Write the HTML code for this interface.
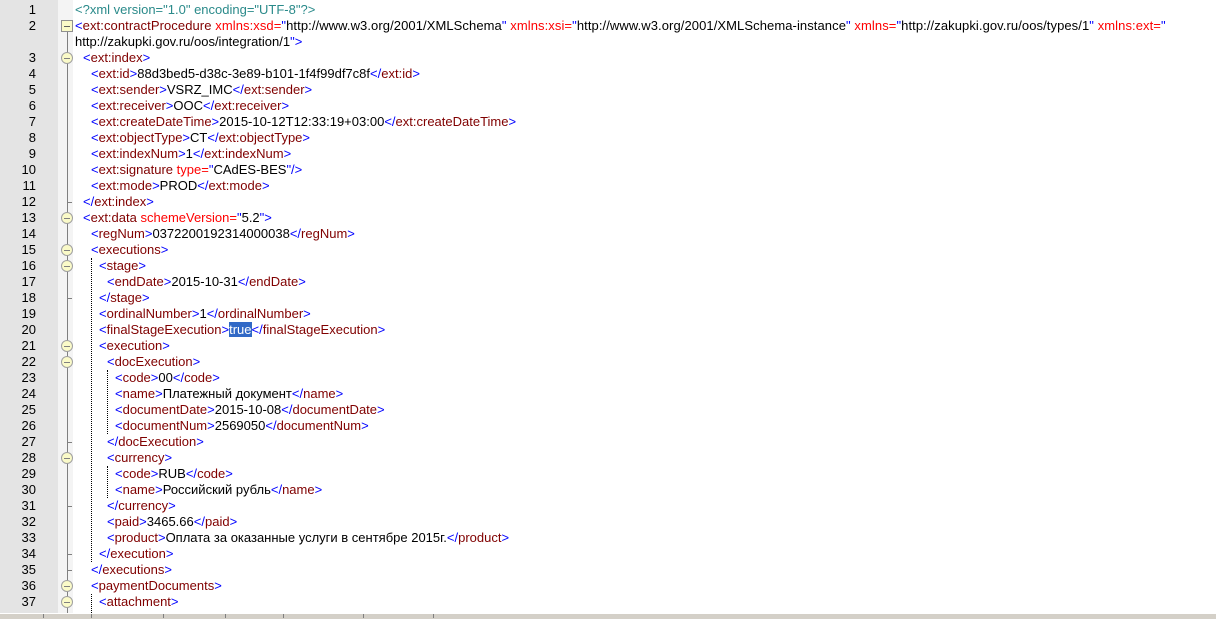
<!DOCTYPE html>
<html><head><meta charset="utf-8"><style>
body{margin:0;width:1216px;height:618px;overflow:hidden;background:#fff;position:relative;font-family:"Liberation Sans",Tahoma,sans-serif;font-size:13px}
#ln{position:absolute;left:0;top:0;width:58px;height:613px;background:#e4e4e4}
#fm{position:absolute;left:58px;top:0;width:15px;height:613px;background:#f4f4f4}
.n{position:absolute;left:0;width:36px;text-align:right;height:16px;line-height:16px;color:#000}
.l{position:absolute;height:16px;line-height:16px;white-space:pre;color:#000}
.w{letter-spacing:0.08px}
.b{color:#0000ff}.t{color:#800000}.a{color:#ff0000}.x{color:#2a8a8a}
.sel{background:#3169c6;color:#fff}
.g{position:absolute;width:0;border-left:1px dotted #000}
.c{position:absolute;left:61px;width:12px;height:12px;border-radius:50%;background:#fafac8;border:1px solid #a0a0a0;box-sizing:border-box}
.c::after{content:"";position:absolute;left:2px;top:5px;width:6px;height:1px;background:#808080}
.tk{position:absolute;left:67px;width:5px;height:1px;background:#808080}
#sb{position:absolute;left:0;top:613px;width:1216px;height:5px;background:#d4d0c8;border-top:1px solid #fff}
.sp{position:absolute;top:614px;width:1px;height:4px;background:#808080}
</style></head><body>
<div id="ln"></div><div id="fm"></div>
<div style="position:absolute;left:67px;top:26px;width:1px;height:587px;background:#808080"></div>
<div style="position:absolute;left:61px;top:20px;width:12px;height:12px;background:#fafac8;border:1px solid #909090;box-sizing:border-box"><div style="position:absolute;left:2px;top:5px;width:6px;height:1px;background:#606060"></div></div>
<div class="c" style="top:52px"></div>
<div class="c" style="top:212px"></div>
<div class="c" style="top:244px"></div>
<div class="c" style="top:260px"></div>
<div class="c" style="top:340px"></div>
<div class="c" style="top:356px"></div>
<div class="c" style="top:452px"></div>
<div class="c" style="top:580px"></div>
<div class="c" style="top:596px"></div>
<div class="tk" style="top:202px"></div>
<div class="tk" style="top:298px"></div>
<div class="tk" style="top:442px"></div>
<div class="tk" style="top:506px"></div>
<div class="tk" style="top:554px"></div>
<div class="tk" style="top:570px"></div>
<div class="g" style="left:91px;top:258px;height:304px"></div>
<div class="g" style="left:91px;top:594px;height:19px"></div>
<div class="g" style="left:107px;top:370px;height:64px"></div>
<div class="g" style="left:107px;top:466px;height:32px"></div>

<div class="n" style="top:2px">1</div><div class="n" style="top:18px">2</div>
<div class="n" style="top:50px">3</div><div class="n" style="top:66px">4</div><div class="n" style="top:82px">5</div><div class="n" style="top:98px">6</div><div class="n" style="top:114px">7</div><div class="n" style="top:130px">8</div><div class="n" style="top:146px">9</div><div class="n" style="top:162px">10</div><div class="n" style="top:178px">11</div><div class="n" style="top:194px">12</div><div class="n" style="top:210px">13</div><div class="n" style="top:226px">14</div><div class="n" style="top:242px">15</div><div class="n" style="top:258px">16</div><div class="n" style="top:274px">17</div><div class="n" style="top:290px">18</div><div class="n" style="top:306px">19</div><div class="n" style="top:322px">20</div><div class="n" style="top:338px">21</div><div class="n" style="top:354px">22</div><div class="n" style="top:370px">23</div><div class="n" style="top:386px">24</div><div class="n" style="top:402px">25</div><div class="n" style="top:418px">26</div><div class="n" style="top:434px">27</div><div class="n" style="top:450px">28</div><div class="n" style="top:466px">29</div><div class="n" style="top:482px">30</div><div class="n" style="top:498px">31</div><div class="n" style="top:514px">32</div><div class="n" style="top:530px">33</div><div class="n" style="top:546px">34</div><div class="n" style="top:562px">35</div><div class="n" style="top:578px">36</div><div class="n" style="top:594px">37</div>

<div class="l x" style="left:75px;top:2px">&lt;?xml version="1.0" encoding="UTF-8"?&gt;</div>
<div class="l w" style="left:75px;top:18px"><span class="b">&lt;</span><span class="t">ext:contractProcedure</span> <span class="a">xmlns:xsd=</span><span class="b">"</span>http://www.w3.org/2001/XMLSchema<span class="b">"</span> <span class="a">xmlns:xsi=</span><span class="b">"</span>http://www.w3.org/2001/XMLSchema-instance<span class="b">"</span> <span class="a">xmlns=</span><span class="b">"</span>http://zakupki.gov.ru/oos/types/1<span class="b">"</span> <span class="a">xmlns:ext=</span><span class="b">"</span></div>
<div class="l" style="left:75px;top:34px">http://zakupki.gov.ru/oos/integration/1<span class="b">"&gt;</span></div>
<div class="l" style="left:83px;top:50px"><span class="b">&lt;</span><span class="t">ext:index</span><span class="b">&gt;</span></div>
<div class="l" style="left:91px;top:66px"><span class="b">&lt;</span><span class="t">ext:id</span><span class="b">&gt;</span>88d3bed5-d38c-3e89-b101-1f4f99df7c8f<span class="b">&lt;/</span><span class="t">ext:id</span><span class="b">&gt;</span></div>
<div class="l" style="left:91px;top:82px"><span class="b">&lt;</span><span class="t">ext:sender</span><span class="b">&gt;</span>VSRZ_IMC<span class="b">&lt;/</span><span class="t">ext:sender</span><span class="b">&gt;</span></div>
<div class="l" style="left:91px;top:98px"><span class="b">&lt;</span><span class="t">ext:receiver</span><span class="b">&gt;</span>OOC<span class="b">&lt;/</span><span class="t">ext:receiver</span><span class="b">&gt;</span></div>
<div class="l" style="left:91px;top:114px"><span class="b">&lt;</span><span class="t">ext:createDateTime</span><span class="b">&gt;</span>2015-10-12T12:33:19+03:00<span class="b">&lt;/</span><span class="t">ext:createDateTime</span><span class="b">&gt;</span></div>
<div class="l" style="left:91px;top:130px"><span class="b">&lt;</span><span class="t">ext:objectType</span><span class="b">&gt;</span>CT<span class="b">&lt;/</span><span class="t">ext:objectType</span><span class="b">&gt;</span></div>
<div class="l" style="left:91px;top:146px"><span class="b">&lt;</span><span class="t">ext:indexNum</span><span class="b">&gt;</span>1<span class="b">&lt;/</span><span class="t">ext:indexNum</span><span class="b">&gt;</span></div>
<div class="l" style="left:91px;top:162px"><span class="b">&lt;</span><span class="t">ext:signature</span> <span class="a">type=</span><span class="b">"</span>CAdES-BES<span class="b">"/&gt;</span></div>
<div class="l" style="left:91px;top:178px"><span class="b">&lt;</span><span class="t">ext:mode</span><span class="b">&gt;</span>PROD<span class="b">&lt;/</span><span class="t">ext:mode</span><span class="b">&gt;</span></div>
<div class="l" style="left:83px;top:194px"><span class="b">&lt;/</span><span class="t">ext:index</span><span class="b">&gt;</span></div>
<div class="l" style="left:83px;top:210px"><span class="b">&lt;</span><span class="t">ext:data</span> <span class="a">schemeVersion=</span><span class="b">"</span>5.2<span class="b">"&gt;</span></div>
<div class="l" style="left:91px;top:226px"><span class="b">&lt;</span><span class="t">regNum</span><span class="b">&gt;</span>0372200192314000038<span class="b">&lt;/</span><span class="t">regNum</span><span class="b">&gt;</span></div>
<div class="l" style="left:91px;top:242px"><span class="b">&lt;</span><span class="t">executions</span><span class="b">&gt;</span></div>
<div class="l" style="left:99px;top:258px"><span class="b">&lt;</span><span class="t">stage</span><span class="b">&gt;</span></div>
<div class="l" style="left:107px;top:274px"><span class="b">&lt;</span><span class="t">endDate</span><span class="b">&gt;</span>2015-10-31<span class="b">&lt;/</span><span class="t">endDate</span><span class="b">&gt;</span></div>
<div class="l" style="left:99px;top:290px"><span class="b">&lt;/</span><span class="t">stage</span><span class="b">&gt;</span></div>
<div class="l" style="left:99px;top:306px"><span class="b">&lt;</span><span class="t">ordinalNumber</span><span class="b">&gt;</span>1<span class="b">&lt;/</span><span class="t">ordinalNumber</span><span class="b">&gt;</span></div>
<div class="l" style="left:99px;top:322px"><span class="b">&lt;</span><span class="t">finalStageExecution</span><span class="b">&gt;</span><span class="sel">true</span><span class="b">&lt;/</span><span class="t">finalStageExecution</span><span class="b">&gt;</span></div>
<div class="l" style="left:99px;top:338px"><span class="b">&lt;</span><span class="t">execution</span><span class="b">&gt;</span></div>
<div class="l" style="left:107px;top:354px"><span class="b">&lt;</span><span class="t">docExecution</span><span class="b">&gt;</span></div>
<div class="l" style="left:115px;top:370px"><span class="b">&lt;</span><span class="t">code</span><span class="b">&gt;</span>00<span class="b">&lt;/</span><span class="t">code</span><span class="b">&gt;</span></div>
<div class="l" style="left:115px;top:386px"><span class="b">&lt;</span><span class="t">name</span><span class="b">&gt;</span>Платежный документ<span class="b">&lt;/</span><span class="t">name</span><span class="b">&gt;</span></div>
<div class="l" style="left:115px;top:402px"><span class="b">&lt;</span><span class="t">documentDate</span><span class="b">&gt;</span>2015-10-08<span class="b">&lt;/</span><span class="t">documentDate</span><span class="b">&gt;</span></div>
<div class="l" style="left:115px;top:418px"><span class="b">&lt;</span><span class="t">documentNum</span><span class="b">&gt;</span>2569050<span class="b">&lt;/</span><span class="t">documentNum</span><span class="b">&gt;</span></div>
<div class="l" style="left:107px;top:434px"><span class="b">&lt;/</span><span class="t">docExecution</span><span class="b">&gt;</span></div>
<div class="l" style="left:107px;top:450px"><span class="b">&lt;</span><span class="t">currency</span><span class="b">&gt;</span></div>
<div class="l" style="left:115px;top:466px"><span class="b">&lt;</span><span class="t">code</span><span class="b">&gt;</span>RUB<span class="b">&lt;/</span><span class="t">code</span><span class="b">&gt;</span></div>
<div class="l" style="left:115px;top:482px"><span class="b">&lt;</span><span class="t">name</span><span class="b">&gt;</span>Российский рубль<span class="b">&lt;/</span><span class="t">name</span><span class="b">&gt;</span></div>
<div class="l" style="left:107px;top:498px"><span class="b">&lt;/</span><span class="t">currency</span><span class="b">&gt;</span></div>
<div class="l" style="left:107px;top:514px"><span class="b">&lt;</span><span class="t">paid</span><span class="b">&gt;</span>3465.66<span class="b">&lt;/</span><span class="t">paid</span><span class="b">&gt;</span></div>
<div class="l" style="left:107px;top:530px"><span class="b">&lt;</span><span class="t">product</span><span class="b">&gt;</span>Оплата за оказанные услуги в сентябре 2015г.<span class="b">&lt;/</span><span class="t">product</span><span class="b">&gt;</span></div>
<div class="l" style="left:99px;top:546px"><span class="b">&lt;/</span><span class="t">execution</span><span class="b">&gt;</span></div>
<div class="l" style="left:91px;top:562px"><span class="b">&lt;/</span><span class="t">executions</span><span class="b">&gt;</span></div>
<div class="l" style="left:91px;top:578px"><span class="b">&lt;</span><span class="t">paymentDocuments</span><span class="b">&gt;</span></div>
<div class="l" style="left:99px;top:594px"><span class="b">&lt;</span><span class="t">attachment</span><span class="b">&gt;</span></div>

<div id="sb"></div>
<div class="sp" style="left:43px"></div><div class="sp" style="left:91px"></div><div class="sp" style="left:163px"></div><div class="sp" style="left:225px"></div><div class="sp" style="left:283px"></div><div class="sp" style="left:363px"></div><div class="sp" style="left:433px"></div>
</body></html>
